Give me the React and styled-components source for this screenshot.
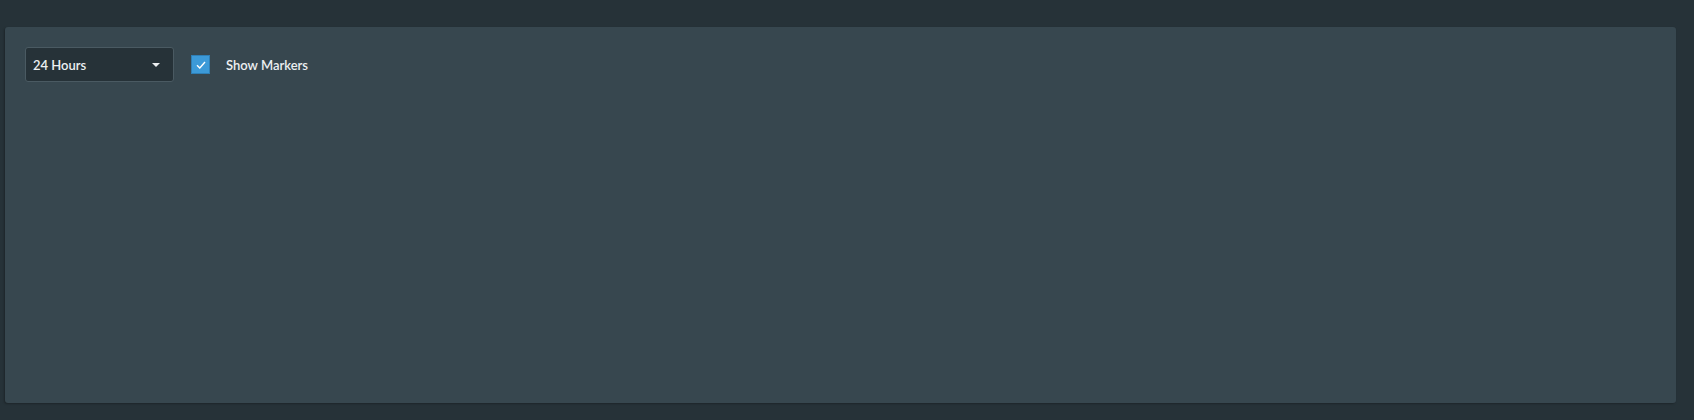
import React, { useState } from 'react';
import styled, { createGlobalStyle } from 'styled-components';

const GlobalStyle = createGlobalStyle`
  html, body {
    margin: 0;
    padding: 0;
    background: #263238;
    font-family: "Lato", "Noto Sans", sans-serif;
  }
`;

const Page = styled.div`
  width: 1694px;
  height: 420px;
  box-sizing: border-box;
  padding: 27px 18px 17px 5px;
  background: #263238;
`;

const Panel = styled.div`
  height: 100%;
  box-sizing: border-box;
  background: #37474f;
  border-radius: 3px;
  box-shadow: -1px 1px 2px rgba(0, 0, 0, 0.25);
  padding: 20px 20px;
`;

const Toolbar = styled.div`
  display: flex;
  align-items: center;
`;

const Select = styled.div`
  width: 149px;
  height: 35px;
  box-sizing: border-box;
  display: flex;
  align-items: center;
  justify-content: space-between;
  padding: 0 13px 0 7px;
  background: #263238;
  border: 1px solid #4a5a62;
  border-radius: 3px;
  color: #eceff1;
  font-size: 13px;
  font-weight: 600;
  cursor: pointer;
`;

const Caret = styled.span`
  width: 0;
  height: 0;
  border-left: 4px solid transparent;
  border-right: 4px solid transparent;
  border-top: 4px solid #eceff1;
`;

const CheckLabel = styled.label`
  display: flex;
  align-items: center;
  margin-left: 17px;
  color: #eceff1;
  font-size: 13px;
  font-weight: 600;
  cursor: pointer;
  user-select: none;
`;

const Box = styled.span`
  width: 19px;
  height: 19px;
  box-sizing: border-box;
  display: flex;
  align-items: center;
  justify-content: center;
  background: ${(p) => (p.$checked ? '#3c9ad8' : 'transparent')};
  border: 1px solid ${(p) => (p.$checked ? '#2f7fb5' : '#78909c')};
  margin-right: 16px;
`;

export default function App() {
  const [checked, setChecked] = useState(true);
  return (
    <>
      <GlobalStyle />
      <Page>
        <Panel>
          <Toolbar>
            <Select>
              <span>24 Hours</span>
              <Caret />
            </Select>
            <CheckLabel onClick={() => setChecked(!checked)}>
              <Box $checked={checked}>
                {checked && (
                  <svg width="10" height="8" viewBox="0 0 10 8">
                    <path d="M1 4.2 L3.8 7 L9 1" fill="none" stroke="#fff" strokeWidth="1.4" />
                  </svg>
                )}
              </Box>
              Show Markers
            </CheckLabel>
          </Toolbar>
        </Panel>
      </Page>
    </>
  );
}
